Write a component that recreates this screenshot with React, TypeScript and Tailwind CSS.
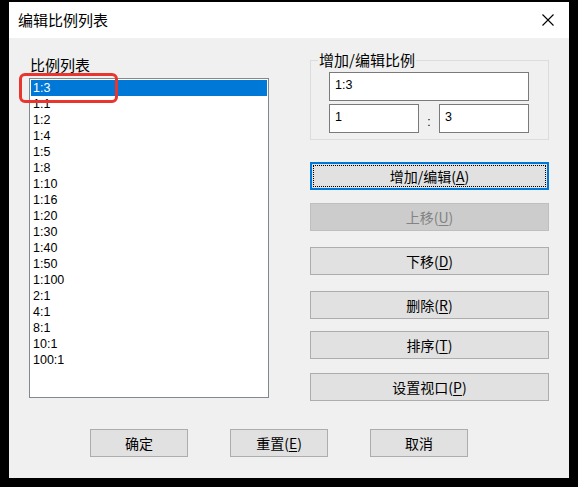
import React from 'react';

const cjk = "font-['Microsoft_YaHei','Noto_Sans_CJK_SC',sans-serif]";

const ratios = ['1:3', '1:1', '1:2', '1:4', '1:5', '1:8', '1:10', '1:16', '1:20', '1:30', '1:40', '1:50', '1:100', '2:1', '4:1', '8:1', '10:1', '100:1'];

type BtnProps = {
  label: string;
  hotkey?: string;
  className?: string;
  disabled?: boolean;
  focused?: boolean;
};

const DlgButton = ({ label, hotkey, className = '', disabled, focused }: BtnProps) => {
  let look = 'border border-[#adadad] bg-[#e1e1e1] text-black';
  if (disabled) look = 'border border-[#bfbfbf] bg-[#cccccc] text-[#838383]';
  if (focused) look = 'border-2 border-[#0078d7] bg-[#e1e1e1] text-black outline-1 outline-dotted outline-black outline-offset-[-4px]';
  return (
    <div className={`flex h-[28px] items-center justify-center text-[14px] leading-none ${cjk} ${look} ${className}`}>
      <span>
        {label}
        {hotkey && (
          <>
            (<span className="underline underline-offset-2">{hotkey}</span>)
          </>
        )}
      </span>
    </div>
  );
};

const TextBox = ({ value, className = '' }: { value: string; className?: string }) => (
  <div className={`h-[29px] border border-[#7a7a7a] bg-white pl-[5px] pt-[5px] text-[12.5px] leading-[14px] text-black font-['Liberation_Sans',sans-serif] ${className}`}>
    {value}
  </div>
);

export default function App() {
  return (
    <div className="flex h-[487px] w-[578px] bg-black pl-[9px] pt-[2px]">
      <div className="flex h-[476px] w-[560px] flex-col">
        {/* title bar */}
        <div className={`flex h-[36px] items-center justify-between bg-white pl-[9px] pr-[15px] text-[15px] text-black ${cjk}`}>
          <span>编辑比例列表</span>
          <svg width="12" height="12" viewBox="0 0 12 12" className="text-black">
            <path d="M0.5 0.5 L11.5 11.5 M11.5 0.5 L0.5 11.5" stroke="currentColor" strokeWidth="1.1" fill="none" />
          </svg>
        </div>

        {/* body */}
        <div className="flex flex-1 flex-col bg-[#f0f0f0]">
          <div className="flex items-start pl-[20px]">
            {/* scale list */}
            <div className="flex w-[240px] flex-col pt-[18px]">
              <div className={`h-[18px] pl-[1px] text-[15px] leading-[18px] text-black ${cjk}`}>比例列表</div>
              <div className="relative mt-[4px] h-[320px] border border-[#828790] bg-white p-[1px]">
                {ratios.map((r, i) => (
                  <div
                    key={r}
                    className={`h-[16px] pl-[2px] text-[12.5px] leading-[16px] font-['Liberation_Sans',sans-serif] ${i === 0 ? 'bg-[#0078d7] text-white' : 'text-black'}`}
                  >
                    {r}
                  </div>
                ))}
                {/* red annotation */}
                <div className="pointer-events-none absolute left-[-11px] top-[-6px] h-[30px] w-[99px] rounded-[6px] border-[3px] border-[#e8352d]" />
              </div>
            </div>

            {/* right side */}
            <div className="ml-[41px] flex w-[239px] flex-col pt-[13px]">
              <fieldset className="border border-[#dcdcdc] pb-[6px]">
                <legend className={`ml-[7px] px-[1px] text-[15px] leading-[18px] text-black ${cjk}`}>增加/编辑比例</legend>
                <div className="ml-[18px] mt-[3px] flex flex-col gap-[3px]">
                  <TextBox value="1:3" className="w-[200px]" />
                  <div className="flex w-[200px]">
                    <TextBox value="1" className="w-[90px]" />
                    <div className="flex w-[20px] justify-center pt-[11px] text-[12px] leading-[14px] text-black font-['Liberation_Sans',sans-serif]">:</div>
                    <TextBox value="3" className="w-[90px]" />
                  </div>
                </div>
              </fieldset>

              <DlgButton label="增加/编辑" hotkey="A" focused className="mt-[22px]" />
              <DlgButton label="上移" hotkey="U" disabled className="mt-[13px]" />
              <DlgButton label="下移" hotkey="D" className="mt-[16px]" />
              <DlgButton label="删除" hotkey="R" className="mt-[16px]" />
              <DlgButton label="排序" hotkey="T" className="mt-[12px]" />
              <DlgButton label="设置视口" hotkey="P" className="mt-[14px]" />
            </div>
          </div>

          {/* bottom buttons */}
          <div className="mt-[28px] flex gap-[42px] pl-[81px]">
            <DlgButton label="确定" className="w-[98px]" />
            <DlgButton label="重置" hotkey="E" className="w-[98px]" />
            <DlgButton label="取消" className="w-[98px]" />
          </div>
        </div>
      </div>
    </div>
  );
}
